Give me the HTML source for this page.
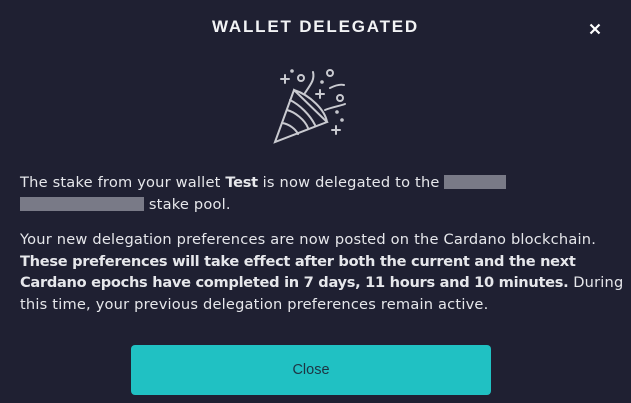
<!DOCTYPE html>
<html><head><style>
body{margin:0;width:631px;height:403px;background:#1f2032;font-family:"Liberation Sans",sans-serif;color:#e6e7eb;overflow:hidden;position:relative}
.t{position:absolute;top:17px;left:0;width:631px;text-align:center;font-weight:bold;font-size:17px;letter-spacing:1.8px;color:#f2f3f5}
.x{position:absolute;left:589px;top:23px}
.p{position:absolute;left:20px;width:610px;font-family:"DejaVu Sans",sans-serif;font-size:14.6px;line-height:21.6px;white-space:nowrap;letter-spacing:0.2px}
.p b{letter-spacing:-0.3px}
.b{display:inline-block;background:#8a8b96;height:14px;vertical-align:-2px;opacity:.85}
.btn{position:absolute;left:131px;top:345px;width:360px;height:50px;background:#20c1c3;border-radius:4px;text-align:center;line-height:50px;font-size:14.5px;color:#1d3443}
</style></head><body>
<div class="t">WALLET DELEGATED</div>
<svg class="x" width="12" height="12" viewBox="0 0 12 12"><path d="M1.5 1.5L10.5 10.5M10.5 1.5L1.5 10.5" stroke="#fff" stroke-width="2.2"/></svg>
<svg style="position:absolute;left:260px;top:60px" width="100" height="90" viewBox="0 0 100 90" fill="none" stroke="#c9cad0" stroke-width="2" stroke-linecap="round">
<path d="M34 30 L15 82 L67 62 Z"/>
<path d="M34 30 C50 35 65 50 67 62"/>
<path d="M27 50 C35 52 45 60 48 68"/><path d="M22 63 C30 64 36 70 38 74"/><path d="M30 40 C40 45 50 55 55 65"/>
<path d="M45 33 C50 25 55 20 53 12"/><path d="M65 50 C72 47 80 46 85 44"/><path d="M70 28 C76 25 80 24 84 25"/>
<circle cx="41" cy="18" r="3"/><circle cx="70" cy="13" r="3"/><circle cx="80" cy="38" r="3"/>
<path d="M25 15v8M21 19h8"/><path d="M60 30v8M56 34h8"/><path d="M76 66v8M72 70h8"/>
<circle cx="32" cy="11" r=".8"/><circle cx="62" cy="22" r=".8"/><circle cx="77" cy="52" r=".8"/><circle cx="82" cy="60" r=".8"/>
</svg>
<div class="p" style="top:172px">The stake from your wallet <b>Test</b> is now delegated to the <span class="b" style="width:62px"></span><br><span class="b" style="width:124px"></span> stake pool.</div>
<div class="p" style="top:229px">Your new delegation preferences are now posted on the Cardano blockchain.<br><b>These preferences will take effect after both the current and the next</b><br><b>Cardano epochs have completed in 7 days, 11 hours and 10 minutes.</b> During<br>this time, your previous delegation preferences remain active.</div>
<div class="btn">Close</div>
</body></html>
